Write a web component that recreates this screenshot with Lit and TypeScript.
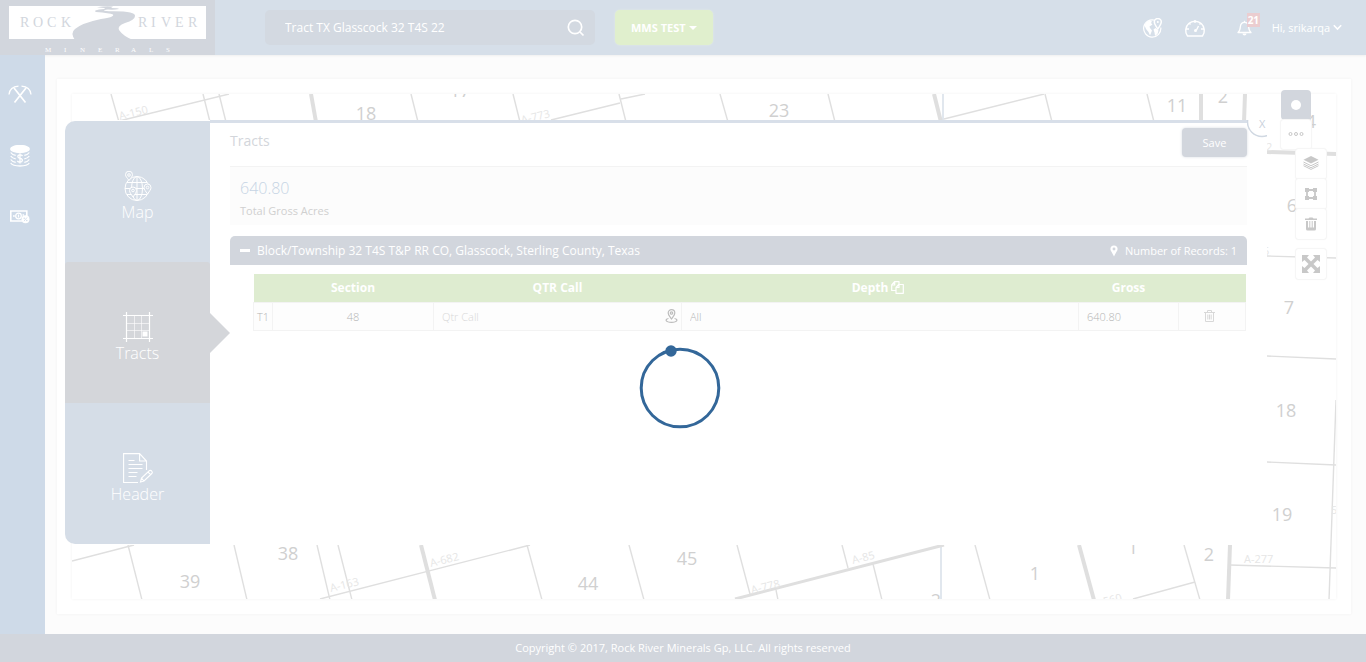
import { LitElement, html, svg, css } from "lit";
import { customElement, state } from "lit/decorators.js";

type Line = [number, number, number, number, number?];
type Label = [number, number, string];

const MAP_LINES: Line[] = [
  [111, 94, 119, 122], [119, 121, 229, 94], [203, 94, 210, 122], [219, 94, 226, 122],
  [311, 94, 316, 122, 4], [411, 94, 418, 122], [513, 94, 520, 122],
  [551, 120, 620, 103], [619, 94, 626, 122], [621, 99, 645, 94], [720, 94, 728, 122],
  [828, 94, 835, 122], [934, 94, 941, 122, 4], [944, 119, 1044, 94],
  [1045, 94, 1052, 122], [1147, 94, 1154, 122], [1201, 94, 1201, 122, 4],
  [1245, 94, 1244, 122, 4],
  [1267, 152, 1336, 154, 4], [1267, 256, 1336, 258], [1267, 356, 1336, 359],
  [1267, 462, 1336, 465], [1336, 400, 1329, 600],
  [72, 561, 134, 545], [128, 545, 142, 600], [234, 545, 247, 600],
  [317, 545, 330, 600], [338, 545, 352, 600], [320, 599, 530, 545],
  [421, 545, 435, 600, 4], [527, 545, 542, 600], [629, 545, 644, 600],
  [737, 545, 750, 594], [842, 545, 848, 568], [735, 599, 944, 545, 3],
  [873, 564, 882, 600], [776, 590, 778, 600], [975, 545, 990, 600],
  [1079, 545, 1094, 600, 4], [1184, 545, 1200, 600], [1133, 599, 1195, 582],
  [1230, 545, 1228, 600, 4], [1230, 565, 1336, 568],
];
const WATER_LINES: Line[] = [[943, 94, 943, 121, 2], [941, 545, 941, 600, 2]];
const SECTIONS: Label[] = [
  [366, 120, "18"], [460, 97, "17"], [779, 117, "23"], [1177, 112, "11"], [1223, 103, "2"],
  [1311, 128, "4"], [1292, 212, "6"], [1289, 314, "7"], [1286, 417, "18"], [1282, 521, "19"],
  [190, 588, "39"], [288, 560, "38"], [588, 590, "44"], [687, 565, "45"],
  [1035, 580, "1"], [1133, 554, "1"], [1209, 561, "2"], [936, 607, "2"],
];
const ABSTRACTS: Label[] = [
  [120, 120, "A-150"], [522, 124, "A-773"], [331, 592, "A-163"], [431, 567, "A-682"],
  [752, 594, "A-778"], [853, 564, "A-85"], [1094, 608, "A-560"],
];
const LEVEL_ABSTRACTS: Label[] = [[1244, 563, "A-277"], [1266, 151, "2"], [1263, 255, "5"], [1331, 514, "5"]];

@customElement("survey-map")
export class SurveyMap extends LitElement {
  static styles = css`
    :host { display: block; position: absolute; inset: 0; overflow: hidden; }
    svg { display: block; width: 100%; height: 100%; }
    .line { stroke: #dfdfdf; }
    .water { stroke: #e1e7ee; }
    .section { font: 18px "Open Sans", sans-serif; fill: #d0d0d0; text-anchor: middle; }
    .abstract { font: 11px "Open Sans", sans-serif; fill: #e6e6e6; }
  `;
  private line(l: Line, cls: string) {
    return svg`<line class=${cls} x1=${l[0]} y1=${l[1]} x2=${l[2]} y2=${l[3]} stroke-width=${l[4] ?? 1.4} />`;
  }
  render() {
    return html`<svg viewBox="72 94 1264 505" preserveAspectRatio="xMidYMid slice" role="img" aria-label="Survey map">
      ${WATER_LINES.map((l) => this.line(l, "water"))}
      ${MAP_LINES.map((l) => this.line(l, "line"))}
      ${SECTIONS.map(([x, y, t]) => svg`<text class="section" x=${x} y=${y}>${t}</text>`)}
      ${ABSTRACTS.map(([x, y, t]) => svg`<text class="abstract" transform="translate(${x} ${y}) rotate(-14)">${t}</text>`)}
      ${LEVEL_ABSTRACTS.map(([x, y, t]) => svg`<text class="abstract" x=${x} y=${y}>${t}</text>`)}
    </svg>`;
  }
}

const logo = html`<svg width="215" height="55" viewBox="0 0 215 55" role="img" aria-label="Rock River Minerals">
  <rect width="215" height="55" fill="#d2d6dd" />
  <rect x="9" y="6" width="197" height="33" fill="#fff" />
  <path d="M97 7.2Q106 5.500 113 6.500L111 8Q118 8 119 9Q114 10 108 9.500Q98 11 112 11.200Q136 11 135 16Q135 20 125 23Q117 26 119 30Q123 36 133 40L75 40Q70 33 75 29Q82 23 101 19Q115 17 113 14.500Q110 13 96 12Q92 10 104 9Q108 8 97 7.200Z" fill="#d2d6dd" />
  <g font-family="Liberation Serif, serif" font-size="14" fill="#d2d6dd">
    <text x="20 33 47 61" y="27">ROCK</text>
    <text x="138 151 161 175 188" y="27">RIVER</text>
  </g>
  <text x="45 64 80 98 115 131 149 166" y="51.500" font-family="Liberation Serif, serif" font-size="7" fill="#fff">MINERALS</text>
</svg>`;

const icons = {
  search: html`<svg width="18" height="18" viewBox="0 0 18 18" fill="none" stroke="#fff" stroke-width="1.700"><circle cx="8" cy="8" r="6.700" /><path d="M13 13l3.500 3.500" /></svg>`,
  globe: html`<svg width="20" height="20" viewBox="0 0 20 20" fill="none" stroke="#fff" stroke-width="1.200"><path d="M12 2.300A8.600 8.600 0 1 0 17.800 9.500" /><path d="M1.500 7.500Q3 3.500 7 2.500l2 1-1 1.500 1.500 1.500-3 2L7 10l2 2.500-2 5-1.500-3.500L3 11z" fill="#fff" stroke="none" /><path d="M10.500 11.500l2-1.500 3 2.500-1 3.500-2.500 2-.5-3.500z" fill="#fff" stroke="none" /><path d="M14.800 11c-1.700-3-3.500-4.500-3.500-7a3.500 3.500 0 0 1 7 0c0 2.500-1.800 4-3.500 7z" stroke-width="1.500" /><circle cx="14.800" cy="4" r="1" fill="#fff" stroke="none" /></svg>`,
  gauge: html`<svg width="22" height="20" viewBox="0 0 22 20" fill="none" stroke="#fff" stroke-width="1.400"><path d="M3.500 18A9.300 9.300 0 1 1 18.500 18Z" stroke-linejoin="round" /><path d="M11 2v3M2 11h3M17 11h3M5 5l1.500 1.500M17 5l-1.500 1.500" /><path d="M14.500 8l-2 4" /><circle cx="11.500" cy="12.500" r="1.500" fill="#fff" stroke="none" /></svg>`,
  bell: html`<svg width="15" height="16" viewBox="0 0 15 16" fill="none" stroke="#fff" stroke-width="1.300" stroke-linejoin="round"><path d="M1 12.500c2-1.500 2.200-3.500 2.400-6C3.600 4 5 2.400 7.500 2.400s3.900 1.600 4.100 4.100c.2 2.500.4 4.500 2.400 6z" /><path d="M7.500 2.400V.8" /><path d="M5.500 13.500a2 2 0 0 0 4 0z" fill="#fff" stroke="none" /></svg>`,
  chevron: html`<svg width="9" height="7" viewBox="0 0 9 7" fill="none" stroke="#fff" stroke-width="1.600"><path d="M.8 1.200L4.500 5l3.700-3.800" /></svg>`,
  picks: html`<svg width="24" height="20" viewBox="0 0 24 20" fill="none" stroke="#fff" stroke-width="1.300"><path d="M6 3l11.500 14.500M18 3L6.500 17.500" stroke-width="1.700" /><path d="M1 9.500C1.500 5 4.500 1.500 10.500 1.200M23 9.500c-.5-4.500-3.500-8-9.500-8.300" /></svg>`,
  coins: html`<svg width="20" height="22" viewBox="0 0 20 22" fill="none" stroke="#fff" stroke-width="1.300"><ellipse cx="10" cy="4" rx="9.300" ry="3.500" fill="#fff" /><path d="M.7 7.500q1.500 2.300 5 2.800M.7 11q1.500 2.300 5 2.800M.7 14.500q1.500 2.300 5 2.800M19.300 7.500q-1.500 2.300-5 2.800M19.300 11q-1.500 2.300-5 2.800M19.300 14.500q-1.500 2.300-5 2.800M.7 18q2 3 9.300 3t9.300-3" /><path d="M12.500 11q-1-1.300-2.700-1.100-2.200.2-1.900 1.900.3 1.200 2.200 1.500 2.400.4 2.300 2-.3 1.800-2.400 1.800-1.800 0-2.700-1.300M10 8.500v10" /></svg>`,
  cash: html`<svg width="20" height="14" viewBox="0 0 20 14" fill="none" stroke="#fff" stroke-width="1.300"><path d="M12 11H.8V1h16v5" stroke-width="1.600" /><circle cx="8.500" cy="6" r="2.800" /><path d="M8.500 4.500v3M3 6h1.800M12.500 5h1.500" /><circle cx="15.500" cy="9.300" r="4" fill="#fff" stroke="none" /><path d="M17 7.500l-3 3.600" stroke="#cedae8" stroke-width=".8" /><circle cx="14.200" cy="8.200" r=".7" fill="#cedae8" stroke="none" /><circle cx="16.800" cy="10.500" r=".7" fill="#cedae8" stroke="none" /></svg>`,
  map: html`<svg width="30" height="30" viewBox="0 0 30 30" fill="none" stroke="#fff" stroke-width="1"><circle cx="14" cy="17.500" r="12" /><ellipse cx="14" cy="17.500" rx="5.500" ry="12" /><path d="M14 5.500v24M2 17.500h24M4 11.500h20M4 23.500h20" /><g fill="#d5dde7"><path d="M6 9.500C4 6.500 2.500 5.500 2.500 3.700a3.500 3.500 0 0 1 7 0C9.500 5.500 8 6.500 6 9.500zM24.500 23c-2-3-3.500-4.500-3.500-6.500a3.500 3.500 0 0 1 7 0c0 2-1.500 3.500-3.500 6.500zM10 26c-2-3-3.500-4.500-3.500-6.500a3.500 3.500 0 0 1 7 0C13.500 21.500 12 23 10 26z" /><circle cx="6" cy="4" r="1.300" /><circle cx="24.500" cy="16.500" r="1.300" /><circle cx="10" cy="19.500" r="1.300" /></g></svg>`,
  tracts: html`<svg width="30" height="30" viewBox="0 0 30 30" fill="none" stroke="#fff"><path d="M3.500 0v30M26.500 0v30M0 3.500h30M0 26.500h30" stroke-width="1.200" /><path d="M11.500 4v22M18.500 4v22M4 11.500h22M4 18.500h22" stroke-width=".6" /><path d="M19.500 19.500h5v5h-5z" fill="#fff" stroke="none" /></svg>`,
  header: html`<svg width="30" height="30" viewBox="0 0 30 30" fill="none" stroke="#fff" stroke-width="1.100"><path d="M15 29.500H.6V.6h16L23.500 8v9M16.600.6V8h6.900M5.500 7.500h6M5.500 11.500h14M5.500 15.500h14M5.500 19.500h9M5.500 23.500h8" /><path d="M17.500 29l1-4 8-7.500q1.500-.5 2.500 1 .7 1-.2 2L21 28zM18.500 25l2.500 3M25 19l2.800 2.800" /></svg>`,
  pin: html`<svg width="8" height="12" viewBox="0 0 8 12"><path d="M4 .5A3.600 3.600 0 0 0 .4 4C.4 6 2.300 7.500 4 11.500 5.700 7.500 7.600 6 7.600 4A3.600 3.600 0 0 0 4 .5zm0 2a1.400 1.400 0 1 1 0 2.900 1.400 1.400 0 0 1 0-2.900z" fill="#fff" /></svg>`,
  copy: html`<svg width="13" height="13" viewBox="0 0 13 13" fill="none" stroke="#fff" stroke-width="1.200" stroke-linejoin="round"><path d="M5 9.500H.7V4L3.500.7H8v2.500M.7 4h3V.7M5 6.500l2.700-3h4.600v8.800H5zM5 6.500h3v-3" /></svg>`,
  locate: html`<svg width="13" height="14" viewBox="0 0 13 14" fill="none" stroke="#bdbdbd" stroke-width="1.200"><path d="M6.500 10C4.500 7 3.200 6 3.200 4a3.300 3.300 0 0 1 6.600 0c0 2-1.300 3-3.300 6z" /><circle cx="6.500" cy="4" r="1.200" /><path d="M3.500 9.500C-.5 10.500.5 13.300 6.500 13.300s7-2.800 3-3.800" /></svg>`,
  bin: html`<svg width="11" height="12" viewBox="0 0 11 12" fill="none" stroke="#d8d8d8" stroke-width="1"><path d="M0 2.500h11M1.500 2.500v9h8v-9M3.500 2.500v-2h4v2M3.800 4.500v5M5.500 4.500v5M7.200 4.500v5" /></svg>`,
  dots: html`<svg width="16" height="6" viewBox="0 0 16 6" fill="none" stroke="#c6c6c6"><circle cx="2.500" cy="3" r="1.500" /><circle cx="8" cy="3" r="1.500" /><circle cx="13.500" cy="3" r="1.500" /></svg>`,
  layers: html`<svg width="16" height="14" viewBox="0 0 16 14" fill="#c8c8c8"><path d="M8 0l7.500 3.800L8 7.600.5 3.800z" /><path d="M.5 6L8 9.700 15.500 6M.5 8L8 11.700 15.500 8M.5 9.700L8 13.400l7.500-3.700" fill="none" stroke="#c8c8c8" stroke-width="1" /></svg>`,
  polygon: html`<svg width="12" height="12" viewBox="0 0 12 12" fill="#c8c8c8"><path d="M2 2h8v8H2z" fill="none" stroke="#c8c8c8" stroke-width="1.800" /><path d="M0 0h4v4H0zM8 0h4v4H8zM0 8h4v4H0zM8 8h4v4H8z" /></svg>`,
  trash: html`<svg width="12" height="14" viewBox="0 0 12 14" fill="#c8c8c8"><path d="M0 1.500h3.500L4.500.5h3l1 1H12V3H0zM1 4h2v6.500h1.300V4h1v6.500h1.400V4h1v6.500H9V4h2v8q0 1.500-1.500 1.500h-7Q1 13.500 1 12z" /></svg>`,
  expand: html`<svg width="18" height="18" viewBox="0 0 18 18" fill="#c8c8c8"><path d="M0 0h7L5 2.500 9 6.500l4-4L11 0h7v7l-2.500-2-4 4 4 4L18 11v7h-7l2-2.500-4-4-4 4L7 18H0v-7l2.500 2 4-4-4-4L0 7z" /></svg>`,
};

const TABS = [
  { name: "Map", icon: icons.map },
  { name: "Tracts", icon: icons.tracts },
  { name: "Header", icon: icons.header },
];

@customElement("app-root")
export class AppRoot extends LitElement {
  @state() private tab = "Tracts";

  static styles = css`
    :host { display: flex; flex-direction: column; min-height: 100vh; background: #fcfcfc; font-family: "Open Sans", sans-serif; font-size: 11px; color: #ccc; }
    * { box-sizing: border-box; }
    svg { display: block; flex: none; }
    button, input { font: inherit; color: inherit; border: 0; background: none; padding: 0; margin: 0; cursor: pointer; }
    a { color: inherit; text-decoration: none; }
    .topbar { display: flex; align-items: center; height: 55px; background: #d6dfe9; color: #fff; box-shadow: 0 1px 2px #efefef; }
    .search { display: flex; align-items: center; width: 330px; height: 35px; margin: 0 20px 0 50px; padding: 0 10px 0 20px; border-radius: 5px; background: #d3d9e1; }
    .search input { flex: 1; min-width: 0; font-size: 12px; font-weight: 500; outline: 0; cursor: text; }
    .team { display: flex; align-items: center; gap: 3px; height: 35px; padding: 0 16px; border-radius: 5px; background: #e0efcd; font-weight: 700; box-shadow: 0 0 2px #e6efe0; }
    .caret { border: 4px solid transparent; border-top-color: #fff; border-bottom: 0; }
    .actions { display: flex; align-items: center; margin-left: auto; padding-right: 24px; }
    .gauge { margin-left: 21px; }
    .alerts { position: relative; margin: 0 20px 0 31px; }
    .badge { position: absolute; left: 10px; top: -7px; padding: 0 1px; background: #ebcdd0; font-size: 10px; line-height: 14px; font-weight: 700; }
    .user { display: flex; align-items: center; gap: 3px; font-weight: 500; }
    .middle { display: flex; flex: 1; }
    .sidebar { display: flex; flex-direction: column; align-items: center; gap: 39px; width: 45px; padding: 29px 5px 0 0; background: #cedae8; }
    .sidebar a { display: flex; align-items: center; height: 22px; }
    main { display: flex; flex: 1; min-width: 0; padding: 24px 15px 20px 12px; }
    .card { display: flex; flex: 1; min-width: 0; padding: 15px; background: #fff; box-shadow: 0 0 3px #f1f1f1; }
    .map { position: relative; flex: 1; min-width: 0; min-height: 440px; box-shadow: 0 0 3px #f1f1f1; }
    .modal { position: absolute; top: 26px; left: -7px; right: 69px; bottom: 54px; display: flex; background: linear-gradient(#fff, #fff) right / calc(100% - 20px) 100% no-repeat; }
    .tabs { display: flex; flex-direction: column; width: 145px; margin: 1px 0; border-radius: 10px 0 0 10px; background: #d5dde7; }
    .tab { position: relative; display: flex; flex: 1; flex-direction: column; align-items: center; justify-content: center; padding-top: 10px; color: #fff; font-size: 16px; font-weight: 300; line-height: 22px; }
    .tab.active { background: #d4d6da; border-radius: 3px 3px 0 0; }
    .tab.active::after { content: ""; position: absolute; left: 100%; top: 50%; margin-top: -20px; border: 20px solid transparent; border-left-color: #d4d6da; border-right: 0; }
    .content { flex: 1; min-width: 0; padding-left: 20px; margin-right: 20px; background: #fff; border-top: 3px solid #d8dfe9; }
    .close { position: absolute; right: 0; top: 0; width: 20px; height: 18px; overflow: hidden; }
    .heading { display: flex; justify-content: space-between; align-items: flex-start; padding: 5px 0 9px; }
    h1 { margin: 3px 0 0; font-size: 14px; line-height: 20px; font-weight: 400; color: #d3d6db; }
    .save { width: 65px; height: 29px; border-radius: 4px; background: #d2d6dd; color: #fff; font-weight: 500; box-shadow: 0 0 3px #d8dce3; }
    .summary { height: 59px; padding: 10px; border-top: 1px solid #f3f3f3; background: #fcfcfc; }
    .total { font-size: 16px; line-height: 22px; font-weight: 300; color: #c6d4e4; }
    .caption { line-height: 24px; color: #d0d0d0; }
    .group { display: flex; align-items: center; width: 100%; height: 29px; margin: 11px 0 9px; padding: 0 10px; border-radius: 5px 5px 0 0; background: #d2d6dd; color: #fff; font-weight: 500; }
    .minus { width: 10px; height: 3px; margin-right: 7px; background: #fff; }
    .title { font-size: 12px; }
    .records { display: flex; align-items: center; gap: 7px; margin-left: auto; }
    .tablewrap { padding: 0 1px 0 23px; }
    table { width: 100%; table-layout: fixed; border-collapse: collapse; }
    .c-id { width: 19px; } .c-section { width: 161px; } .c-qtr { width: 248px; } .c-gross { width: 100px; } .c-del { width: 67px; }
    th { height: 28px; padding: 0; background: #deecd0; color: #fff; font-size: 12px; font-weight: 700; }
    .depth { display: flex; align-items: center; justify-content: center; gap: 3px; padding-right: 4px; }
    td { height: 28px; padding: 0; border: 1px solid #f3f3f3; background: #fdfdfd; font-weight: 300; text-align: center; color: #b4b4b4; }
    .cell { display: flex; align-items: center; padding: 0 3px 0 8px; }
    .cell input { flex: 1; width: 100%; min-width: 0; cursor: text; outline: 0; }
    .cell input::placeholder { color: #d8d8d8; opacity: 1; }
    .bin { display: block; margin: 0 auto; padding-right: 6px; }
    .tools { position: absolute; top: -4px; right: 10px; display: flex; flex-direction: column; align-items: flex-end; }
    .tool { display: flex; align-items: center; justify-content: center; width: 30px; height: 30px; border-radius: 3px; background: #fff; box-shadow: 0 0 0 1px #f6f6f6, 0 0 2px #ddd; }
    .tool.record { margin-right: 15px; border-radius: 4px; background: #d2d6dd; box-shadow: none; }
    .dot { width: 10px; height: 10px; border-radius: 50%; background: #fff; }
    .tool.more { height: 29px; margin-right: 15px; padding-bottom: 2px; }
    .tool.layers { padding-bottom: 3px; }
    .tool.spaced { margin-top: 10px; }
    footer { display: flex; align-items: center; justify-content: center; height: 28px; padding-bottom: 1px; background: #d2d6dd; color: #fff; }
    .spinner { position: fixed; left: 50%; top: 50%; width: 82px; height: 86px; margin: 12px 0 0 -44px; }
  `;

  render() {
    return html`
      <header class="topbar">
        <a href="#home" aria-label="Rock River Minerals">${logo}</a>
        <form class="search" role="search" @submit=${(e: Event) => e.preventDefault()}>
          <input type="text" aria-label="Search" value="Tract TX Glasscock 32 T4S 22" />
          <button type="submit" aria-label="Search">${icons.search}</button>
        </form>
        <button class="team">MMS TEST<span class="caret"></span></button>
        <div class="actions">
          <button aria-label="Map search">${icons.globe}</button>
          <button class="gauge" aria-label="Dashboard">${icons.gauge}</button>
          <button class="alerts" aria-label="Notifications">${icons.bell}<span class="badge">21</span></button>
          <button class="user">Hi, srikarqa ${icons.chevron}</button>
        </div>
      </header>
      <div class="middle">
        <nav class="sidebar">
          <a href="#minerals" aria-label="Minerals">${icons.picks}</a>
          <a href="#revenue" aria-label="Revenue">${icons.coins}</a>
          <a href="#payments" aria-label="Payments">${icons.cash}</a>
        </nav>
        <main>
          <div class="card"><div class="map">
            <survey-map></survey-map>
            <section class="modal">
              <nav class="tabs">
                ${TABS.map((t) => html`<button class="tab ${t.name === this.tab ? "active" : ""}" @click=${() => (this.tab = t.name)}>${t.icon}<span>${t.name}</span></button>`)}
              </nav>
              <div class="content">
                <div class="heading"><h1>Tracts</h1><button class="save">Save</button></div>
                <div class="summary"><div class="total">640.80</div><div class="caption">Total Gross Acres</div></div>
                <button class="group" aria-expanded="true">
                  <span class="minus"></span><span class="title">Block/Township 32 T4S T&amp;P RR CO, Glasscock, Sterling County, Texas</span>
                  <span class="records">${icons.pin} Number of Records: 1</span>
                </button>
                <div class="tablewrap"><table>
                  <colgroup><col class="c-id" /><col class="c-section" /><col class="c-qtr" /><col /><col class="c-gross" /><col class="c-del" /></colgroup>
                  <thead><tr>
                    <th></th><th>Section</th><th>QTR Call</th>
                    <th><div class="depth">Depth ${icons.copy}</div></th><th>Gross</th><th></th>
                  </tr></thead>
                  <tbody><tr>
                    <td>T1</td><td>48</td>
                    <td><div class="cell"><input type="text" aria-label="Quarter call" placeholder="Qtr Call" /><button aria-label="Locate">${icons.locate}</button></div></td>
                    <td><div class="cell"><input type="text" aria-label="Depth" value="All" /></div></td>
                    <td><div class="cell"><input type="text" aria-label="Gross acres" value="640.80" /></div></td>
                    <td><button class="bin" aria-label="Delete tract">${icons.bin}</button></td>
                  </tr></tbody>
                </table></div>
              </div>
              <button class="close" aria-label="Close"><svg width="20" height="18" viewBox="0 0 20 18"><circle cx="15" cy="2" r="14.500" fill="#fff" stroke="#d0d8e2" stroke-width="1.500" /><text x="12" y="8" font-size="11" fill="#c9d1dc">X</text></svg></button>
            </section>
            <div class="tools">
              <button class="tool record" aria-label="Select"><span class="dot"></span></button>
              <button class="tool more" aria-label="More">${icons.dots}</button>
              <button class="tool layers" aria-label="Layers">${icons.layers}</button>
              <button class="tool" aria-label="Draw shape">${icons.polygon}</button>
              <button class="tool" aria-label="Delete shape">${icons.trash}</button>
              <button class="tool spaced" aria-label="Full screen">${icons.expand}</button>
            </div>
          </div></div>
        </main>
      </div>
      <footer>Copyright © 2017, Rock River Minerals Gp, LLC. All rights reserved</footer>
      <svg class="spinner" viewBox="0 0 82 86" role="status" aria-label="Loading"><circle cx="41" cy="45" r="38.800" fill="none" stroke="#336799" stroke-width="3" /><circle cx="32" cy="8" r="5.700" fill="#336799" /></svg>
    `;
  }
}
